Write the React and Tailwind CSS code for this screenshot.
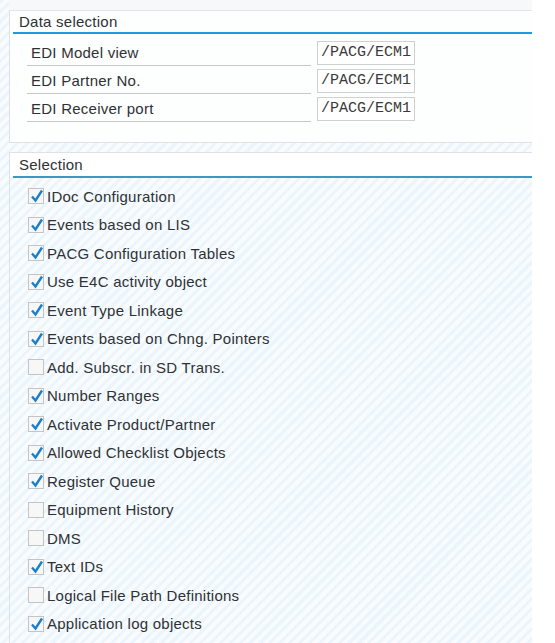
import React from 'react';

const fields = [
  { label: 'EDI Model view', value: '/PACG/ECM1' },
  { label: 'EDI Partner No.', value: '/PACG/ECM1' },
  { label: 'EDI Receiver port', value: '/PACG/ECM1' },
];

const options = [
  { label: 'IDoc Configuration', checked: true },
  { label: 'Events based on LIS', checked: true },
  { label: 'PACG Configuration Tables', checked: true },
  { label: 'Use E4C activity object', checked: true },
  { label: 'Event Type Linkage', checked: true },
  { label: 'Events based on Chng. Pointers', checked: true },
  { label: 'Add. Subscr. in SD Trans.', checked: false },
  { label: 'Number Ranges', checked: true },
  { label: 'Activate Product/Partner', checked: true },
  { label: 'Allowed Checklist Objects', checked: true },
  { label: 'Register Queue', checked: true },
  { label: 'Equipment History', checked: false },
  { label: 'DMS', checked: false },
  { label: 'Text IDs', checked: true },
  { label: 'Logical File Path Definitions', checked: false },
  { label: 'Application log objects', checked: true },
];

// SAP-style checkbox
const CheckBox = ({ checked }) => (
  <div className="relative w-[16px] h-[16px] shrink-0 border border-[#c4c4c4] bg-[#f7f7f7]">
    {checked && (
      <svg className="absolute left-[1px] top-[-1px]" width="14" height="16" viewBox="0 0 14 16">
        <path d="M2 8.5 L5.5 12.5 L12 2.5" fill="none" stroke="#1c80c9" strokeWidth="2.4" />
      </svg>
    )}
  </div>
);

const stripes =
  'bg-[repeating-linear-gradient(135deg,#ecf5fb_0px,#ecf5fb_3px,#f9fcfe_3px,#f9fcfe_7px)]';

const App = () => {
  return (
    <div className="w-[555px] h-[643px] overflow-hidden bg-white flex text-[#2f3235] tracking-[0.25px] font-['Liberation_Sans',Arial,sans-serif]">
      <div className={`w-[532px] h-full flex flex-col ${stripes}`}>
        {/* top strip */}
        <div className="h-[11px] bg-[#f6f8fa] border-b border-[#e2e5e8] ml-[9px]" />

        {/* Data selection */}
        <div className="ml-[9px] h-[132px] bg-[#fdfefe] border-l border-b border-[#dfe2e5] flex flex-col">
          <div className="h-[21px] pl-[9px] text-[15px] leading-[22px]">Data selection</div>
          <div className="h-[2px] ml-[3px] bg-[#1d9ae0]" />
          <div className="flex flex-col pt-[6px] pl-[17px]">
            {fields.map((f) => (
              <div key={f.label} className="h-[28px] flex items-start">
                <div className="w-[284px] h-[26px] border-b border-[#c9c9c9] pl-[4px] text-[15px] leading-[26px]">
                  {f.label}
                </div>
                <div className="ml-[6px] mt-[1px] w-[98px] h-[24px] border border-[#d0d0d0] bg-white pl-[3px] text-[15px] leading-[22px] tracking-normal font-['Liberation_Mono',monospace] text-[#3a3a3a]">
                  {f.value}
                </div>
              </div>
            ))}
          </div>
        </div>

        <div className="h-[9px]" />

        {/* Selection */}
        <div className="ml-[9px] flex-1 border-l border-t border-[#dfe2e5] flex flex-col">
          <div className="h-[23px] bg-white pl-[9px] text-[15px] leading-[24px]">Selection</div>
          <div className="h-[2px] ml-[3px] bg-[#3a97c6]" />
          <div className="flex flex-col pt-[4px] pl-[18px]">
            {options.map((o) => (
              <div key={o.label} className="h-[28.5px] flex items-center">
                <CheckBox checked={o.checked} />
                <span className="ml-[3px] text-[15px] leading-none whitespace-nowrap">{o.label}</span>
              </div>
            ))}
          </div>
        </div>
      </div>
    </div>
  );
};

export default App;
